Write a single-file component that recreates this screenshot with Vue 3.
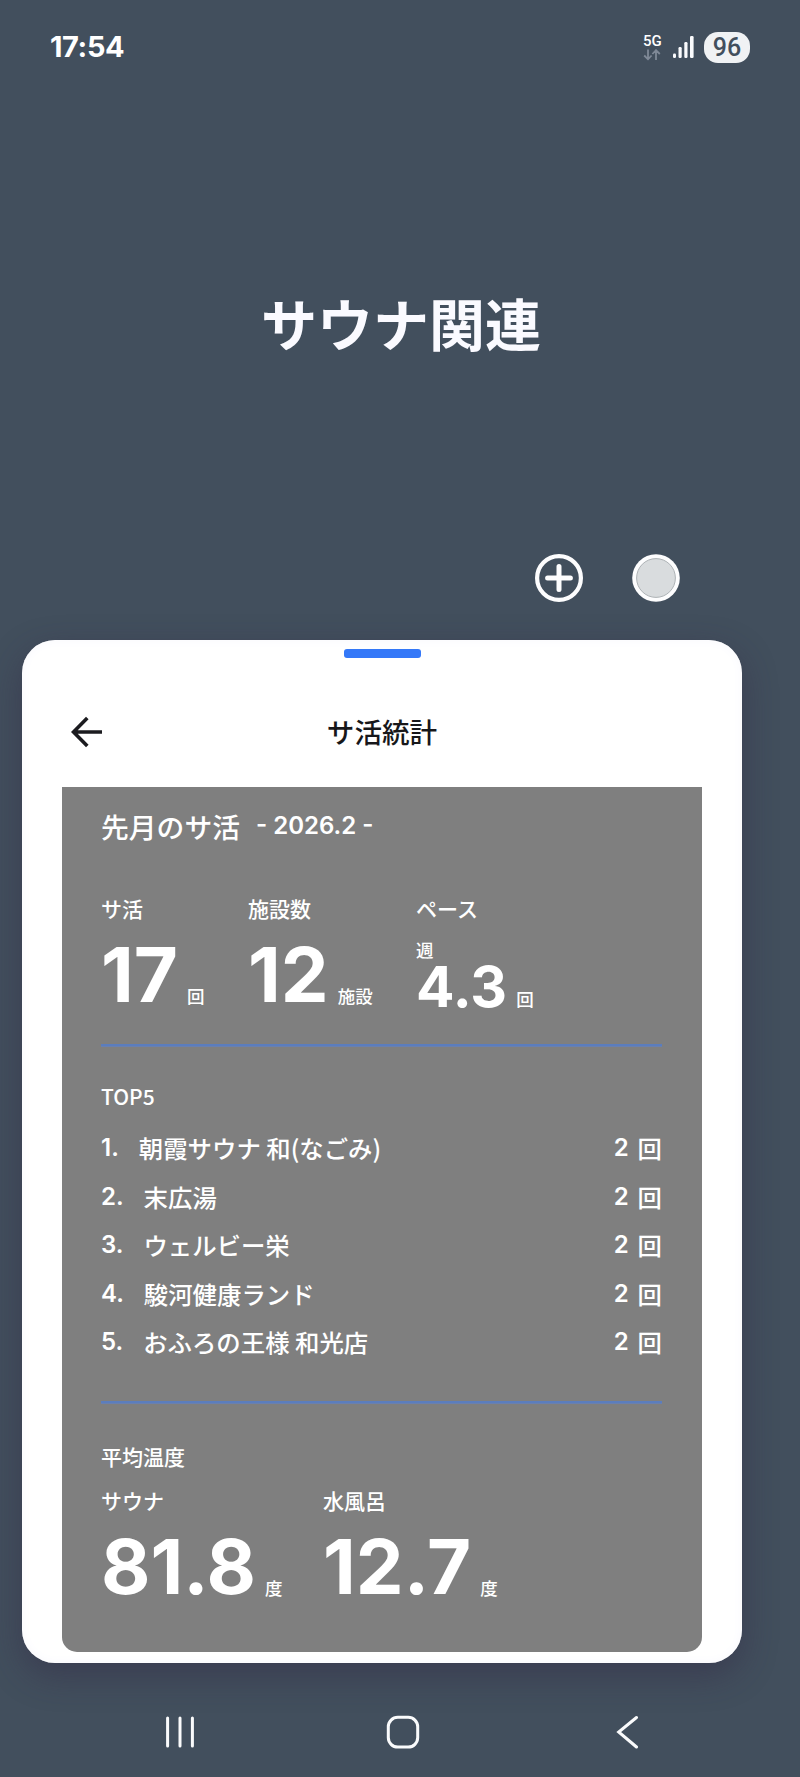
<template>
  <div class="screen">
    <header class="status-bar">
      <span class="clock">17:54</span>
      <div class="status-icons">
        <div class="network">
          <span class="network-type">5G</span>
          <svg width="18" height="12" viewBox="0 0 18 12">
            <path d="M5 0.5V10M1.2 6.5L5 10.3L8.6 6.5M13 11V1.5M9.4 5L13 1.2L16.8 5" />
          </svg>
        </div>
        <svg class="signal" width="21" height="22" viewBox="0 0 21 22">
          <rect x="0" y="17.5" width="3" height="4.5" rx="1.2" />
          <rect x="5.5" y="11" width="3.2" height="11" rx="1.2" />
          <rect x="11.3" y="6" width="3.2" height="16" rx="1.2" />
          <rect x="17" y="0" width="3.6" height="22" rx="1.2" />
        </svg>
        <span class="battery">96</span>
      </div>
    </header>

    <h1 class="folder-title">サウナ関連</h1>

    <div class="folder-actions">
      <svg width="48" height="48" viewBox="0 0 48 48">
        <circle class="ring" cx="24" cy="24" r="21.9" />
        <path class="plus" d="M24 12.6V35.4M12.6 24H35.4" />
      </svg>
      <svg width="48" height="48" viewBox="0 0 48 48">
        <circle cx="24" cy="24" r="23.8" fill="#fdfdfe" />
        <circle class="swatch" cx="24" cy="24" r="19.4" />
      </svg>
    </div>

    <main class="widget">
      <div class="grip"></div>
      <div class="app-bar">
        <svg class="back" width="32" height="32" viewBox="0 0 32 32">
          <path d="M16.3 2L2.5 16L16.3 30M2.5 16H31" />
        </svg>
        <h2 class="app-title">サ活統計</h2>
      </div>

      <section class="panel">
        <div class="panel-head">
          <span class="panel-title">先月のサ活</span>
          <span class="month">- 2026.2 -</span>
        </div>

        <div class="stats">
          <div v-for="s in stats" :key="s.label">
            <div class="label">{{ s.label }}</div>
            <div v-if="s.prefix" class="prefix">{{ s.prefix }}</div>
            <div class="figure" :class="{ small: s.prefix }">
              <span class="value">{{ s.value }}</span>
              <span class="unit">{{ s.unit }}</span>
            </div>
          </div>
        </div>

        <div class="divider"></div>

        <div class="label top-label">TOP5</div>
        <ol class="ranking">
          <li v-for="(name, i) in ranking" :key="name">
            <span class="rank">{{ i + 1 }}.</span>
            <span class="name">{{ name }}</span>
            <span class="count">2</span>
            <span class="times">回</span>
          </li>
        </ol>

        <div class="divider"></div>

        <div class="label temp-label">平均温度</div>
        <div class="temps">
          <div v-for="t in temps" :key="t.label">
            <div class="label">{{ t.label }}</div>
            <div class="figure">
              <span class="value">{{ t.value }}</span>
              <span class="unit">度</span>
            </div>
          </div>
        </div>
      </section>
    </main>

    <nav class="nav-bar">
      <svg width="34" height="34" viewBox="0 0 34 34">
        <path d="M4.6 3V31M17 3V31M29.4 3V31" />
      </svg>
      <svg width="34" height="34" viewBox="0 0 34 34">
        <rect x="2.3" y="2.3" width="29.4" height="29.8" rx="9.5" />
      </svg>
      <svg width="34" height="34" viewBox="0 0 34 34">
        <path d="M26.5 2.5L8.7 17L26.5 32" />
      </svg>
    </nav>
  </div>
</template>

<script setup>
const stats = [
  { label: 'サ活', value: '17', unit: '回' },
  { label: '施設数', value: '12', unit: '施設' },
  { label: 'ペース', value: '4.3', unit: '回', prefix: '週' }
]

const ranking = [
  '朝霞サウナ 和(なごみ)',
  '末広湯',
  'ウェルビー栄',
  '駿河健康ランド',
  'おふろの王様 和光店'
]

const temps = [
  { label: 'サウナ', value: '81.8' },
  { label: '水風呂', value: '12.7' }
]
</script>

<style>
body {
  margin: 0;
  background: #424f5d;
}
</style>

<style scoped>
.screen {
  box-sizing: border-box;
  width: 800px;
  height: 1777px;
  overflow: hidden;
  background: #424f5d;
  color: #fff;
  font-family: "Noto Sans CJK JP", sans-serif;
  display: flex;
  flex-direction: column;
}

.screen svg {
  display: block;
  flex: none;
}

.status-bar {
  height: 94px;
  padding: 0 50px;
  display: flex;
  align-items: center;
  justify-content: space-between;
}

.clock {
  font: 700 29px/40px Inter, sans-serif;
  letter-spacing: -0.4px;
}

.status-icons {
  display: flex;
  align-items: center;
}

.network {
  width: 18px;
  margin-right: 12px;
}

.network-type {
  display: block;
  font: 500 15px/15px Roboto, sans-serif;
}

.network path {
  fill: none;
  stroke: #7f8997;
  stroke-width: 1.8;
}

.signal {
  margin-right: 10px;
  fill: #fafbfd;
}

.battery {
  width: 46px;
  height: 31px;
  border-radius: 14px;
  background: #f0f2f4;
  color: #424f5d;
  font: 500 25px/31px Roboto, sans-serif;
  text-align: center;
}

.folder-title {
  margin: 188px 0 0;
  padding-left: 2px;
  font-size: 56px;
  font-weight: 700;
  line-height: 80px;
  text-align: center;
  color: #fafaff;
}

.folder-actions {
  margin: 192px 120px 0 0;
  display: flex;
  justify-content: flex-end;
  gap: 49px;
}

.ring,
.plus {
  fill: none;
  stroke: #fdfdfe;
  stroke-width: 4.2;
  stroke-linecap: round;
}

.plus {
  stroke-width: 5;
}

.swatch {
  fill: #d9dcde;
  stroke: #aeb3b6;
  stroke-width: 1;
}

.widget {
  box-sizing: border-box;
  width: 720px;
  height: 1023px;
  margin: 38px 0 0 22px;
  padding: 9px 40px 0;
  border-radius: 33px;
  background: #fff;
  box-shadow: 0 12px 34px rgba(48, 38, 66, 0.45), inset 0 0 12px #f8f8fd;
}

.grip {
  width: 77px;
  height: 9px;
  margin: 0 auto;
  border-radius: 3px;
  background: #3478f8;
}

.app-bar {
  height: 129px;
  padding: 0 9px;
  display: grid;
  grid-template-columns: 32px 1fr 32px;
  align-items: center;
}

.back {
  margin-top: 19px;
}

.back path {
  fill: none;
  stroke: #1b1b1f;
  stroke-width: 3.6;
}

.app-title {
  margin: 17px 0 0;
  font-size: 27.6px;
  font-weight: 500;
  line-height: 40px;
  text-align: center;
  color: #17171a;
}

.panel {
  box-sizing: border-box;
  height: 865px;
  padding: 12px 40px 0 39px;
  border-radius: 0 0 15px 15px;
  background: #7f7f7f;
}

.panel-head {
  height: 53px;
  display: flex;
  align-items: center;
  gap: 16px;
}

.panel-title {
  font-size: 27.8px;
  font-weight: 500;
  line-height: 40px;
}

.month {
  font: 600 24px/40px Inter, sans-serif;
}

.stats {
  margin-top: 40px;
  height: 120px;
  display: grid;
  grid-template-columns: 147px 168px 1fr;
}

.label {
  font-size: 21px;
  font-weight: 500;
  line-height: 32px;
}

.figure {
  margin-top: 12px;
  display: flex;
  align-items: flex-end;
}

.value {
  font: 700 76px/76px Inter, sans-serif;
}

.unit {
  margin: 0 0 4px 9px;
  font-size: 17.5px;
  font-weight: 500;
  line-height: 24px;
}

.prefix {
  margin-top: 12px;
  font-size: 17.5px;
  font-weight: 500;
  line-height: 28px;
}

.figure.small {
  margin-top: 0;
}

.figure.small .value {
  font-size: 57px;
  line-height: 45px;
}

.figure.small .unit {
  margin-bottom: 0;
  line-height: 20px;
}

.divider {
  height: 2px;
  margin-top: 32px;
  border-bottom: 1px solid #6a80ae;
  background: #5b7dbd;
}

.top-label {
  margin-top: 33px;
}

.ranking {
  height: 248px;
  margin: 12px 0 -3px;
  padding: 0;
  list-style: none;
}

.ranking li {
  height: 48.5px;
  display: flex;
  align-items: center;
  line-height: 48px;
}

.rank,
.count {
  font: 600 24px/48px Inter, sans-serif;
}

.rank {
  margin-right: 20px;
}

.name,
.times {
  font-size: 24.4px;
  font-weight: 500;
}

.count {
  margin-left: auto;
}

.times {
  margin-left: 9px;
}

.temp-label {
  margin-top: 36px;
}

.temps {
  margin-top: 12px;
  display: grid;
  grid-template-columns: 222px 1fr;
}

.nav-bar {
  margin: 52px 0 0 68px;
  display: grid;
  grid-template-columns: repeat(3, 223.5px);
  justify-items: center;
}

.nav-bar path,
.nav-bar rect {
  fill: none;
  stroke: #fafbfc;
  stroke-width: 3;
  stroke-linecap: round;
}
</style>
